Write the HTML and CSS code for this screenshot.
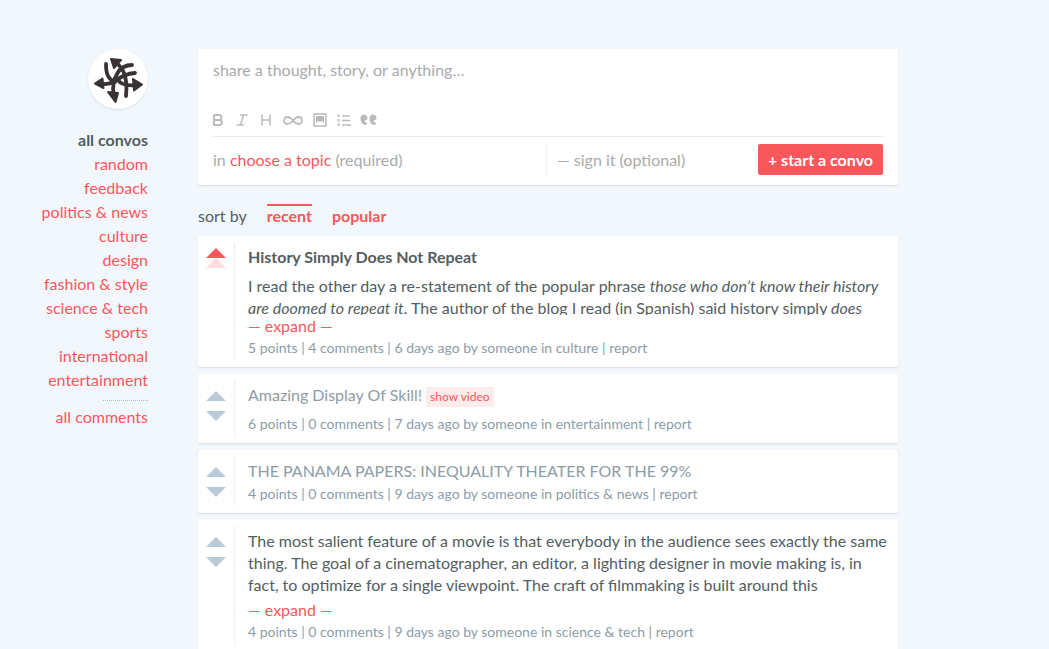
FILE: index.html
```html
<!DOCTYPE html>
<html lang="en">
<head>
<meta charset="utf-8">
<meta name="viewport" content="width=device-width, initial-scale=1">
<title>all convos</title>
<link rel="stylesheet" href="styles.css">
</head>
<body>
<div class="page">
  <aside class="sidebar">
    <a class="logo" href="#" aria-label="home">
      <svg viewBox="0 0 60 60" width="60" height="60" fill="none" stroke="#3a3335" stroke-width="3.8" stroke-linecap="round" stroke-linejoin="round">
        <path d="M18 15Q18 23 20 27Q22 31 27 33"/>
        <path d="M27 13Q33 17 36 24Q39.500 33 38 47"/>
        <path d="M44 16Q34 16 29 25Q24 33 25.500 46"/>
        <path d="M47 24Q36 25 29 31Q22 36 12 35"/>
        <path d="M29 30Q34 38 49 36"/>
        <g fill="#3a3335" stroke-width="2">
          <path d="M23 10L33 11L26 19Z"/>
          <path d="M7 34.500L14.500 29.500L15.500 39Z"/>
          <path d="M20 43L30 44L27.500 53Z"/>
          <path d="M45 30L54 35.500L46 41.500Z"/>
        </g>
      </svg>
    </a>
    <nav class="topics">
      <a class="topic topic-current" href="#">all convos</a>
      <a class="topic" href="#">random</a>
      <a class="topic" href="#">feedback</a>
      <a class="topic" href="#">politics &amp; news</a>
      <a class="topic" href="#">culture</a>
      <a class="topic" href="#">design</a>
      <a class="topic" href="#">fashion &amp; style</a>
      <a class="topic" href="#">science &amp; tech</a>
      <a class="topic" href="#">sports</a>
      <a class="topic" href="#">international</a>
      <a class="topic" href="#">entertainment</a>
      <a class="topic topic-comments" href="#">all comments</a>
    </nav>
  </aside>

  <main class="main">
    <form class="composer">
      <textarea class="composer-text" aria-label="share a thought" placeholder="share a thought, story, or anything…"></textarea>
      <div class="toolbar">
        <button class="tool" type="button" aria-label="bold"><svg width="10" height="12" viewBox="0 0 10 12"><path stroke-width="1.900" d="M1 1H6Q8.500 1 8.500 3.500Q8.500 6 6 6H1V11H6.500Q9 11 9 8.500Q9 6 6 6M1 1V6"/></svg></button>
        <button class="tool" type="button" aria-label="italic"><svg width="12" height="12" viewBox="0 0 12 12"><path d="M4 1H11.500M.5 11H8M7.500 1L4.500 11"/></svg></button>
        <button class="tool" type="button" aria-label="heading"><svg width="10" height="12" viewBox="0 0 10 12"><path d="M1 .5V11.500M9 .5V11.500M1 6H9"/></svg></button>
        <button class="tool" type="button" aria-label="link"><svg width="20" height="12" viewBox="0 0 20 12"><path stroke-width="1.800" d="M10 6.500C7.500 3.500 6 3 4.500 3C2.500 3 1 4.500 1 6.500C1 8.500 2.500 10 4.500 10C9 10 11 3 15.500 3C17.500 3 19 4.500 19 6.500C19 8.500 17.500 10 15.500 10C14 10 12.500 9.500 10 6.500"/></svg></button>
        <button class="tool" type="button" aria-label="image"><svg width="14" height="14" viewBox="0 0 14 14"><path d="M1 1H13V13H1Z"/><path class="solid" d="M3 3H11V10L9 8L7 9L5 8L3 10Z"/></svg></button>
        <button class="tool" type="button" aria-label="list"><svg width="14" height="12" viewBox="0 0 14 12"><path d="M5 2H13M5 6.500H13.500M5 11H14"/><path class="solid" d="M.5 .5H2.500V3H.5ZM.5 5H2.500V7.500H.5ZM.5 9.500H2.500V12H.5Z"/></svg></button>
        <button class="tool" type="button" aria-label="quote"><svg width="17" height="12" viewBox="0 0 17 12"><path class="solid" d="M3.500 .5C6 .5 7.500 2 7.500 4C7.500 5.500 6.500 6.500 5 6.500C4.500 6.500 4.500 8 7 9C7 10.500 6 11 5 11C2 10.500 .5 8 .5 5C.5 2 1.500 .5 3.500 .5ZM12.500 .5C15 .5 16.500 2 16.500 4C16.500 5.500 15.500 6.500 14 6.500C13.500 6.500 13.500 8 16 9C16 10.500 15 11 14 11C11 10.500 9.500 8 9.500 5C9.500 2 10.500 .5 12.500 .5Z"/></svg></button>
      </div>
      <div class="composer-row">
        <div class="topic-choice">in <button class="link-button" type="button">choose a topic</button> (required)</div>
        <input class="signature" type="text" aria-label="sign it" placeholder="— sign it (optional)">
        <button class="submit" type="submit">+ start a convo</button>
      </div>
    </form>

    <nav class="sort">
      <span>sort by</span>
      <a class="sort-link sort-current" href="#">recent</a>
      <a class="sort-link" href="#">popular</a>
    </nav>

    <div class="feed">
      <article class="post">
        <div class="votes voted">
          <button class="vote vote-up" type="button" aria-label="upvote"></button>
          <button class="vote vote-up vote-faded" type="button" aria-label="remove vote"></button>
        </div>
        <div class="post-body">
          <h2 class="post-heading">History Simply Does Not Repeat</h2>
          <p class="excerpt excerpt-short">I read the other day a re-statement of the popular phrase <em>those who don’t know their history are doomed to repeat it</em>. The author of the blog I read (in Spanish) said history simply <em>does</em></p>
          <a class="expand" href="#">— expand —</a>
          <div class="meta"><a href="#">5 points</a> | <a href="#">4 comments</a> | 6 days ago by someone in <a href="#">culture</a> | <a href="#">report</a></div>
        </div>
      </article>

      <article class="post">
        <div class="votes">
          <button class="vote vote-up" type="button" aria-label="upvote"></button>
          <button class="vote vote-down" type="button" aria-label="downvote"></button>
        </div>
        <div class="post-body">
          <div class="post-line post-media"><a class="post-link" href="#">Amazing Display Of Skill!</a><button class="video-button" type="button">show video</button></div>
          <div class="meta"><a href="#">6 points</a> | <a href="#">0 comments</a> | 7 days ago by someone in <a href="#">entertainment</a> | <a href="#">report</a></div>
        </div>
      </article>

      <article class="post">
        <div class="votes">
          <button class="vote vote-up" type="button" aria-label="upvote"></button>
          <button class="vote vote-down" type="button" aria-label="downvote"></button>
        </div>
        <div class="post-body">
          <div class="post-line"><a class="post-link" href="#">THE PANAMA PAPERS: INEQUALITY THEATER FOR THE 99%</a></div>
          <div class="meta"><a href="#">4 points</a> | <a href="#">0 comments</a> | 9 days ago by someone in <a href="#">politics &amp; news</a> | <a href="#">report</a></div>
        </div>
      </article>

      <article class="post">
        <div class="votes">
          <button class="vote vote-up" type="button" aria-label="upvote"></button>
          <button class="vote vote-down" type="button" aria-label="downvote"></button>
        </div>
        <div class="post-body">
          <p class="excerpt">The most salient feature of a movie is that everybody in the audience sees exactly the same thing. The goal of a cinematographer, an editor, a lighting designer in movie making is, in fact, to optimize for a single viewpoint. The craft of filmmaking is built around this</p>
          <a class="expand" href="#">— expand —</a>
          <div class="meta"><a href="#">4 points</a> | <a href="#">0 comments</a> | 9 days ago by someone in <a href="#">science &amp; tech</a> | <a href="#">report</a></div>
        </div>
      </article>
    </div>
  </main>
</div>
</body>
</html>
```
FILE: styles.css
```css
* { box-sizing: border-box; }

body {
  margin: 0;
  background: #f2f7fc;
  color: #535d62;
  font: 16px/22px Lato, sans-serif;
}

a { color: inherit; text-decoration: none; }

button, input, textarea {
  margin: 0;
  padding: 0;
  border: 0;
  background: none;
  color: inherit;
  font: inherit;
}

button { cursor: pointer; }

.page {
  display: flex;
  gap: 50px;
  padding-top: 49px;
}

.sidebar {
  display: flex;
  flex: 0 0 148px;
  flex-direction: column;
  align-items: flex-end;
  gap: 19px;
}

.logo {
  width: 60px;
  height: 60px;
  border-radius: 50%;
  background: #fff;
  box-shadow: 0 1px 2px #d5dee5;
}

.logo svg { display: block; }

.topics {
  display: flex;
  flex-direction: column;
  align-items: flex-end;
  color: #f8575c;
  line-height: 24px;
}

.topic-current { color: #535d62; font-weight: bold; }

.topic-comments { margin-top: 13px; position: relative; }

.topic-comments::before {
  content: "";
  position: absolute;
  top: -5px;
  right: 0;
  width: 45px;
  border-top: 1px dotted #a9bcc9;
}

.main {
  flex: 1 1 0;
  min-width: 0;
  max-width: 700px;
}

.composer, .post {
  border-radius: 2px;
  background: #fff;
  box-shadow: 0 1px 2px #d3dce3;
}

.composer {
  padding: 10px 15px;
  color: #aaa;
}

.composer-text {
  display: block;
  width: 100%;
  height: 48px;
  outline: 0;
  resize: none;
}

.composer-text::placeholder, .signature::placeholder { color: #aaa; opacity: 1; }

.toolbar {
  display: flex;
  align-items: center;
  gap: 10px;
  height: 30px;
  padding-bottom: 3px;
  border-bottom: 1px solid #e5e8ea;
}

.tool svg {
  display: block;
  fill: none;
  stroke: #bbb;
  stroke-width: 1.5;
}

.tool:nth-child(-n+2) { margin-right: 3px; }

.tool:nth-child(3) { margin-right: 2px; }

.tool:last-child { margin-left: -1px; }

.tool .solid { fill: #bbb; stroke: none; }

.composer-row {
  display: grid;
  grid-template-columns: 1fr 212px 125px;
  align-items: center;
  height: 38px;
  padding-top: 7px;
}

.link-button { color: #f8575c; }

.signature {
  min-width: 0;
  height: 31px;
  padding-left: 10px;
  border-left: 1px dotted #d9dde0;
  outline: 0;
}

.submit {
  height: 31px;
  border-radius: 2px;
  background: #f8575c;
  color: #fff;
  font-weight: bold;
}

.sort {
  display: flex;
  align-items: flex-end;
  gap: 20px;
  padding: 19px 0 10px;
  line-height: 20px;
}

.sort-link {
  border-top: 2px solid transparent;
  color: #f8575c;
  font-weight: bold;
}

.sort-current { border-color: #f8575c; }

.feed {
  display: flex;
  flex-direction: column;
  gap: 7px;
}

.post {
  display: flex;
  padding: 7px 8px 7px 0;
}

.votes {
  display: flex;
  flex: 0 0 37px;
  flex-direction: column;
  align-items: center;
  gap: 10px;
  padding-top: 10px;
  border-right: 1px dotted #d9dde0;
}

.voted { gap: 0; padding-top: 5px; }

.vote {
  width: 20px;
  height: 10px;
  background: #b9cbd8;
}

.vote-up { clip-path: polygon(50% 0, 100% 100%, 0 100%); }
.vote-down { clip-path: polygon(0 0, 100% 0, 50% 100%); }
.voted .vote { background: #f8575c; }
.voted .vote-faded { background: #fddddf; }

.post-body {
  flex: 1;
  min-width: 0;
  padding: 3px 0 1px 13px;
}

.post-heading {
  margin: 0 0 7px;
  font-size: 16px;
  line-height: 22px;
}

.excerpt { margin: 0 0 3px; }

.excerpt-short {
  height: 40px;
  margin-bottom: 0;
  overflow: hidden;
}

.expand { display: block; width: max-content; color: #f8575c; }

.post-line { margin-bottom: 1px; color: #8d9ca6; }

.post-media {
  display: flex;
  gap: 4px;
  height: 28px;
}

.video-button {
  align-self: flex-start;
  height: 20px;
  margin-top: 3px;
  padding: 0 4px;
  border-radius: 2px;
  background: #feebec;
  color: #f8575c;
  font-size: 12px;
  line-height: 20px;
}

.meta {
  color: #8d9ca6;
  font-size: 14px;
}
```
